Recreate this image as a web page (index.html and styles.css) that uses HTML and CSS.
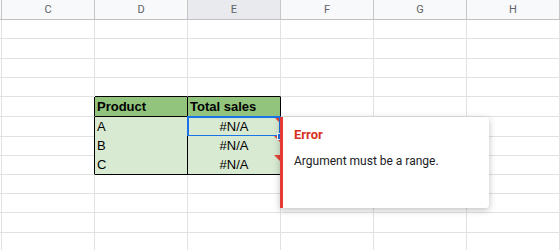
FILE: index.html
```html
<!DOCTYPE html>
<html lang="en">
<head>
    <meta charset="UTF-8">
    <title>Sheet - error tooltip</title>
    <link rel="stylesheet" href="styles.css">
</head>
<body>
<div class="sheet">
    <div class="row head">
        <div class="cell"></div>
        <div class="cell">C</div>
        <div class="cell">D</div>
        <div class="cell active">E</div>
        <div class="cell">F</div>
        <div class="cell">G</div>
        <div class="cell">H</div>
        <div class="cell"></div>
    </div>
    <div class="row"><div class="cell"></div><div class="cell"></div><div class="cell"></div><div class="cell"></div><div class="cell"></div><div class="cell"></div><div class="cell"></div><div class="cell"></div></div>
    <div class="row"><div class="cell"></div><div class="cell"></div><div class="cell"></div><div class="cell"></div><div class="cell"></div><div class="cell"></div><div class="cell"></div><div class="cell"></div></div>
    <div class="row"><div class="cell"></div><div class="cell"></div><div class="cell"></div><div class="cell"></div><div class="cell"></div><div class="cell"></div><div class="cell"></div><div class="cell"></div></div>
    <div class="row"><div class="cell"></div><div class="cell"></div><div class="cell above"></div><div class="cell above"></div><div class="cell"></div><div class="cell"></div><div class="cell"></div><div class="cell"></div></div>
    <div class="row">
        <div class="cell"></div><div class="cell before"></div>
        <div class="cell t-head">Product</div>
        <div class="cell t-head">Total sales</div>
        <div class="cell"></div><div class="cell"></div><div class="cell"></div><div class="cell"></div>
    </div>
    <div class="row">
        <div class="cell"></div><div class="cell before"></div>
        <div class="cell t-data">A</div>
        <div class="cell t-data num flagged selected">#N/A<span class="handle"></span></div>
        <div class="cell"></div><div class="cell"></div><div class="cell"></div><div class="cell"></div>
    </div>
    <div class="row">
        <div class="cell"></div><div class="cell before"></div>
        <div class="cell t-data">B</div>
        <div class="cell t-data num flagged">#N/A</div>
        <div class="cell"></div><div class="cell"></div><div class="cell"></div><div class="cell"></div>
    </div>
    <div class="row">
        <div class="cell"></div><div class="cell before"></div>
        <div class="cell t-data">C</div>
        <div class="cell t-data num flagged">#N/A</div>
        <div class="cell"></div><div class="cell"></div><div class="cell"></div><div class="cell"></div>
    </div>
    <div class="row"><div class="cell"></div><div class="cell"></div><div class="cell"></div><div class="cell"></div><div class="cell"></div><div class="cell"></div><div class="cell"></div><div class="cell"></div></div>
    <div class="row"><div class="cell"></div><div class="cell"></div><div class="cell"></div><div class="cell"></div><div class="cell"></div><div class="cell"></div><div class="cell"></div><div class="cell"></div></div>
    <div class="row"><div class="cell"></div><div class="cell"></div><div class="cell"></div><div class="cell"></div><div class="cell"></div><div class="cell"></div><div class="cell"></div><div class="cell"></div></div>
    <div class="row"><div class="cell"></div><div class="cell"></div><div class="cell"></div><div class="cell"></div><div class="cell"></div><div class="cell"></div><div class="cell"></div><div class="cell"></div></div>

    <div class="error-tip">
        <div class="error-title">Error</div>
        <div class="error-text">Argument must be a range.</div>
    </div>
</div>
</body>
</html>
```

FILE: styles.css
```css
body {
    margin: 0;
    background: #fff;
    font-family: "Liberation Sans", Arial, sans-serif;
    overflow: hidden;
}
.sheet {
    position: relative;
    width: 560px;
}
.row {
    display: grid;
    grid-template-columns: 2px repeat(6, 93px) 1fr;
    height: 19.33px;
}
.cell {
    box-sizing: border-box;
    border-right: 1px solid #e2e2e2;
    border-bottom: 1px solid #e2e2e2;
    font-size: 13px;
    line-height: 19px;
    color: #000;
    padding: 0 2px;
    white-space: nowrap;
}
.row .cell:first-child {
    padding: 0;
}
.head {
    height: 20px;
}
.head .cell {
    background: #f8f9fa;
    border-right-color: #c7c7c7;
    border-bottom-color: #c0c0c0;
    font-family: Roboto, Arial, sans-serif;
    font-size: 11px;
    line-height: 19px;
    color: #5f6368;
    text-align: center;
}
.head .cell.active {
    background: #e8eaed;
}
.above {
    border-bottom-color: #000;
}
.before {
    border-right-color: #000;
}
.t-head {
    background: #93c47d;
    border-right-color: #000;
    border-bottom-color: #000;
    font-weight: bold;
}
.t-data {
    position: relative;
    background: #d9ead3;
    border-right-color: #000;
    border-bottom-color: #000;
}
.num {
    text-align: center;
}
.flagged::before {
    content: "";
    position: absolute;
    top: 0;
    right: 0;
    border-top: 6px solid #ea4335;
    border-left: 6px solid transparent;
}
.selected::after {
    content: "";
    position: absolute;
    top: -1px;
    left: -1px;
    right: -1px;
    bottom: -1px;
    border: 2px solid #1a73e8;
}
.handle {
    position: absolute;
    right: -4px;
    bottom: -4px;
    width: 5px;
    height: 5px;
    background: #1a73e8;
    border: 1px solid #fff;
    z-index: 2;
}
.error-tip {
    position: absolute;
    left: 280px;
    top: 117px;
    width: 209px;
    height: 91px;
    box-sizing: border-box;
    background: #fff;
    border-left: 3px solid #e53935;
    border-radius: 0 3px 3px 0;
    box-shadow: 0 2px 7px rgba(0, 0, 0, 0.25);
    padding: 10px 11px;
    font-family: Roboto, Arial, sans-serif;
    z-index: 3;
}
.error-title {
    color: #d93025;
    font-size: 13px;
    font-weight: bold;
    line-height: 16px;
}
.error-text {
    margin-top: 10px;
    color: #202124;
    font-size: 12px;
    line-height: 16px;
}
```
